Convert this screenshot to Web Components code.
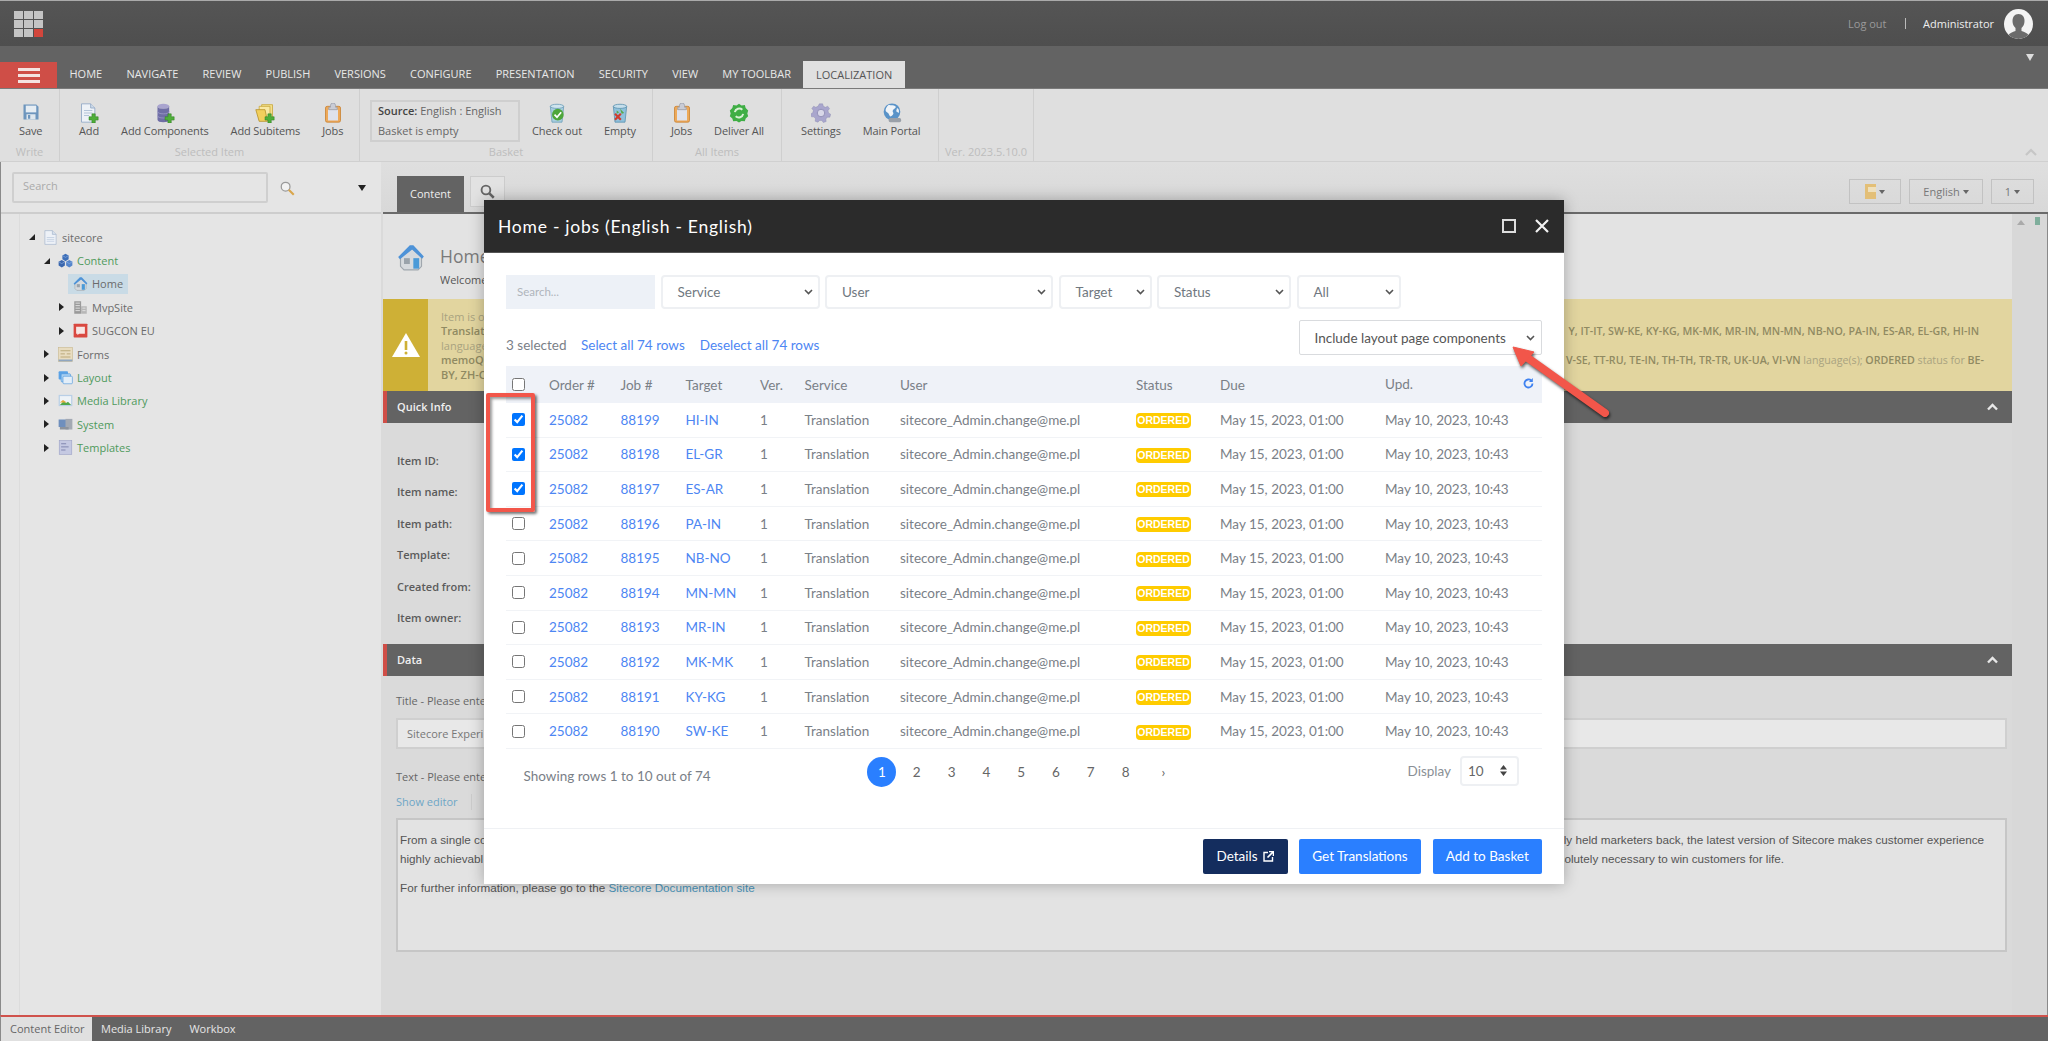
<!DOCTYPE html>
<html><head><meta charset="utf-8"><title>Sitecore</title>
<style>
html,body{margin:0;padding:0;width:2048px;height:1041px;overflow:hidden;background:#dadada;font-family:"Open Sans","Liberation Sans",sans-serif;}
sc-app{display:block;position:relative;width:2048px;height:1041px;overflow:hidden}
</style></head><body>
<sc-app>
  <sc-topbar></sc-topbar>
  <sc-tabbar active="LOCALIZATION"></sc-tabbar>
  <sc-ribbon>
    <sc-rgroup label="Write" w="60" pl="19"><sc-rbtn icon="save">Save</sc-rbtn></sc-rgroup>
    <sc-rgroup label="Selected Item" w="300" pl="19">
      <sc-rbtn icon="add">Add</sc-rbtn><sc-rbtn icon="db">Add Components</sc-rbtn><sc-rbtn icon="folder">Add Subitems</sc-rbtn><sc-rbtn icon="jobs">Jobs</sc-rbtn>
    </sc-rgroup>
    <sc-rgroup label="Basket" w="293" pl="10">
      <sc-source></sc-source><sc-rbtn icon="checkout">Check out</sc-rbtn><sc-rbtn icon="empty">Empty</sc-rbtn>
    </sc-rgroup>
    <sc-rgroup label="All Items" w="129" pl="18"><sc-rbtn icon="jobs">Jobs</sc-rbtn><sc-rbtn icon="deliver">Deliver All</sc-rbtn></sc-rgroup>
    <sc-rgroup label="" w="157" pl="19"><sc-rbtn icon="gear">Settings</sc-rbtn><sc-rbtn icon="globe">Main Portal</sc-rbtn></sc-rgroup>
    <sc-rgroup label="Ver. 2023.5.10.0" w="95" pl="0"></sc-rgroup>
  </sc-ribbon>
  <sc-workspace>
    <sc-tree slot="left">
      <sc-titem l="0" a="open" i="page">sitecore</sc-titem>
      <sc-titem l="1" a="open" i="cubes" g>Content</sc-titem>
      <sc-titem l="2" i="home" sel>Home</sc-titem>
      <sc-titem l="2" a="closed" i="building">MvpSite</sc-titem>
      <sc-titem l="2" a="closed" i="sugcon">SUGCON EU</sc-titem>
      <sc-titem l="1" a="closed" i="forms">Forms</sc-titem>
      <sc-titem l="1" a="closed" i="layout" g>Layout</sc-titem>
      <sc-titem l="1" a="closed" i="media" g>Media Library</sc-titem>
      <sc-titem l="1" a="closed" i="system" g>System</sc-titem>
      <sc-titem l="1" a="closed" i="templates" g>Templates</sc-titem>
    </sc-tree>
    <sc-editor slot="right"></sc-editor>
  </sc-workspace>
  <sc-bottombar></sc-bottombar>
  <sc-modal></sc-modal>
  <sc-annotations></sc-annotations>
</sc-app>
<script>
const plus='<path d="M15.5 13h4v3.5H23v4h-3.5V24h-4v-3.5H12v-4h3.5z" fill="#4fae3a" stroke="#2f7d22" stroke-width=".6"/>';
const ICONS={
save:'<path d="M2 2h17l3 3v17H2z" fill="#6d95bd"/><rect x="5" y="3.5" width="14" height="9" fill="#e6edf3"/><rect x="6" y="15" width="12" height="7" fill="#dfe7ee"/><rect x="8" y="16" width="3" height="5" fill="#6d95bd"/>',
add:'<path d="M3 1h11l5 5v17H3z" fill="#eef2f7" stroke="#8ea6c4"/><path d="M14 1v5h5" fill="#cfdbe9" stroke="#8ea6c4"/><path d="M6 9h10M6 12h10M6 15h6" stroke="#a9bcd3"/>'+plus,
db:'<ellipse cx="10" cy="4" rx="7" ry="3" fill="#a9a4cf"/><path d="M3 4v16c0 2 3 3 7 3s7-1 7-3V4c0 2-3 3-7 3S3 6 3 4z" fill="#6f6ea6"/><path d="M3 10c0 2 3 3 7 3s7-1 7-3M3 15c0 2 3 3 7 3s7-1 7-3" stroke="#9a97c6" fill="none"/>'+plus,
folder:'<path d="M8 2h13v16H8z" fill="#f4e08c" stroke="#c9a83f"/><path d="M5 4h13v16H5z" fill="#f9e9a3" stroke="#c9a83f"/><path d="M1 8h11l3 14H5z" fill="#f2cf5c" stroke="#b8942b"/>'+plus,
jobs:'<rect x="3" y="4" width="18" height="19" rx="2" fill="#eda95a" stroke="#c98436"/><rect x="6" y="8" width="12" height="13" fill="#dfe2ec"/><path d="M9 5V3a3 3 0 016 0v2h2v3H7V5z" fill="#c9ccd6" stroke="#9da1ad"/>',
checkout:'<path d="M4 4h16l-2 19H6z" fill="#a9cfe0" stroke="#6f9fb8"/><ellipse cx="12" cy="4" rx="8" ry="2.5" fill="#cfe4ee" stroke="#6f9fb8"/><circle cx="13" cy="14" r="7" fill="#4ea63b"/><path d="M9 14l3 3 5-6" stroke="#fff" stroke-width="2" fill="none"/>',
empty:'<path d="M4 4h16l-2 19H6z" fill="#8fc1dc" stroke="#5e93b0"/><ellipse cx="12" cy="4" rx="8" ry="2.5" fill="#c5deeb" stroke="#5e93b0"/><path d="M12 7l5 5-3 1zM8 9l3 2-3 2z" fill="#58a848"/><path d="M6 13l7 7M13 13l-7 7" stroke="#cf3c2e" stroke-width="2.6"/>',
deliver:'<path d="M12 1l3 2 4-.5 1 3.500 3 3-1 3.500 1 3.500-3 2.500-1 3.500-4-.5-3 2-3-2-4 .5-1-3.500-3-2.500 1-3.500-1-3.500 3-3 1-3.500 4 .5z" fill="#3fae45"/><path d="M7 11a5.500 5.500 0 019-3M17 13a5.500 5.500 0 01-9 3" stroke="#d8f0d4" stroke-width="2.400" fill="none"/>',
gear:'<path d="M10 1h4l.8 3 2.600 1.200L20 3.800l2.200 2.900-1.800 2.500.6 2.800 2.600 1.500-1 3.500-3 0-1.800 2.200.4 3-3.400 1.200-1.800-2.500h-2.800L8.400 23l-3.400-1.200.4-3-1.800-2.200-3 0-1-3.500 2.600-1.500.6-2.800L1 6.700l2.200-2.900 2.600 1.400L8.400 4z" fill="#a9a6cd" stroke="#8987b0" stroke-width=".5"/><circle cx="12" cy="12" r="4.500" fill="#d8d7e8" stroke="#8987b0"/>',
globe:'<circle cx="12" cy="10.500" r="10" fill="#5a93c8"/><path d="M8 2c3 1 6 0 8 2s-2 3-3 5 2 3 0 5-3 3-4 1-1-3-3-4-2-3-1-5 2-3 3-4z" fill="#f0f4f8"/><path d="M18 6c2 1 3 3 2 6l-3-2z" fill="#eef2f6"/><rect x="8" y="18" width="15" height="5" rx="2" fill="#9aa0a8"/>',
page:'<path d="M3 1h12l6 6v16H3z" fill="#edf1f7" stroke="#9fb0ca"/><path d="M15 1v6h6" fill="#d6e0ec" stroke="#9fb0ca"/><path d="M6 12h12M6 15h12M6 18h12" stroke="#b4c4da"/>',
cubes:'<path d="M12 1l5 3v6l-5 3-5-3V4z" fill="#3e6fb8"/><path d="M6 11l5 3v6l-5 3-5-3v-6z" fill="#3a66ad"/><path d="M18 11l5 3v6l-5 3-5-3v-6z" fill="#5585cc"/><path d="M7 4l5 3 5-3M1 14l5 3 5-3M13 14l5 3 5-3" stroke="#8fb0e0" fill="none"/>',
home:'<path d="M3 12L12 4l9 8v8l-3 3H6l-3-3z" fill="#d6dade" stroke="#a0a7ae"/><path d="M1 12L11 2h3l9 9.500-1.500 2L13 5.500 2.500 14z" fill="#4e93d8"/><rect x="14" y="13" width="5" height="9" fill="#4a9ad8"/><rect x="6" y="13" width="5" height="5" fill="#9aa3ab"/>',
building:'<path d="M2 2h11v20H2z" fill="#9a9a9a"/><path d="M13 10h9v12h-9z" fill="#b7b7b7"/><path d="M4 5h7M4 9h7M4 13h7M4 17h7M15 13h5M15 17h5" stroke="#e3e3e3" stroke-width="1.500"/>',
sugcon:'<rect x="1" y="1" width="22" height="22" rx="1" fill="#d94840"/><path d="M5 6h14v11H10l-3 2v-2H5z" fill="#f7e6e4"/>',
forms:'<rect x="1" y="1" width="22" height="22" fill="#e8dcc0" stroke="#c9b98f"/><path d="M1 20h22v3H1z" fill="#8fa6c0"/><path d="M4 6h16M4 11h7M14 11h6M4 16h16" stroke="#b9a676" stroke-width="1.500"/>',
layout:'<rect x="1" y="2" width="15" height="13" rx="1.500" fill="#5aa2e6"/><rect x="5" y="6" width="15" height="13" rx="1.500" fill="#a9d0f2" stroke="#4d97dc"/><rect x="8" y="10" width="15" height="12" rx="1.500" fill="#e3eef8" stroke="#4d97dc"/>',
media:'<rect x="1" y="3" width="22" height="18" fill="#b9cfe6"/><rect x="3" y="5" width="18" height="14" fill="#eef3f7"/><path d="M3 19l6-6 4 3 3-2 5 5z" fill="#4fa84a"/><path d="M3 15l5-4 6 4z" fill="#e2a93a"/>',
system:'<rect x="1" y="4" width="12" height="12" fill="#6f8fbd"/><rect x="12" y="3" width="11" height="17" fill="#a3a9b3"/><rect x="3" y="16" width="14" height="4" fill="#8d939c"/>',
templates:'<rect x="2" y="1" width="20" height="22" fill="#c5c9e2" stroke="#9da2c6"/><path d="M5 6h8M5 11h12M5 16h7" stroke="#7e83ad" stroke-width="1.500"/>',
search:'<circle cx="9" cy="9" r="7" fill="#f2f2f2" stroke="#9a9a9a" stroke-width="2"/><path d="M14 14l8 8" stroke="#d9a64c" stroke-width="3.500"/>',
searchdark:'<circle cx="9.500" cy="9.500" r="7" fill="none" stroke="#666" stroke-width="3"/><path d="M15 15l7 7" stroke="#666" stroke-width="4"/>'
};
function svg(n,w,h){return `<svg width="${w}" height="${h||w}" viewBox="0 0 24 24" style="display:block;flex:none">${ICONS[n]}</svg>`}
const chev='<svg width="9" height="6" viewBox="0 0 9 6" style="flex:none"><path d="M1 1l3.500 3.500L8 1" fill="none" stroke="#555" stroke-width="1.600"/></svg>';
function el(name,render){customElements.define(name,class extends HTMLElement{connectedCallback(){if(this.shadowRoot)return;const s=this.attachShadow({mode:'open'});s.innerHTML=render(this)}})}

el('sc-topbar',()=>`<style>
:host{display:flex;align-items:center;height:45px;margin-top:1px;background:linear-gradient(#555,#4e4e4e);box-shadow:0 -1px 0 #aaa;padding:0 15px 0 14px;font-size:11px;color:#eee}
.logo{display:grid;grid-template-columns:repeat(3,9px);grid-template-rows:repeat(3,8.300px);gap:1px;margin-top:1px}
.logo i{background:#c4c4c4}.logo i:last-child{background:#d2463c}
.r{margin-left:auto;display:flex;align-items:center}
.lo{color:#9a9a9a}.sep{width:1px;height:11px;background:#bbb;margin:0 17.500px 0 18px}
.av{width:29px;height:30px;border-radius:50%;background:#f3f3f3;margin-left:10px;overflow:hidden}
</style><div class="logo"><i></i><i></i><i></i><i></i><i></i><i></i><i></i><i></i><i></i></div>
<div class="r"><span class="lo">Log out</span><span class="sep"></span><span>Administrator</span>
<div class="av"><svg width="29" height="30" viewBox="0 0 29 30"><path d="M14.500 5c-4 0-6 3-6 7 0 3 1 5 3 7v3c-3 1-6 2-7 4 2 3 6 4 10 4s8-1 10-4c-1-2-4-3-7-4v-3c2-2 3-4 3-7 0-4-2-7-6-7z" fill="#6b6b6b"/></svg></div></div>`);

el('sc-tabbar',h=>{const t=['HOME','NAVIGATE','REVIEW','PUBLISH','VERSIONS','CONFIGURE','PRESENTATION','SECURITY','VIEW','MY TOOLBAR','LOCALIZATION'];
return `<style>
:host{display:flex;align-items:flex-end;height:42px;background:#636363;position:relative;font-size:11px;border-bottom:1px solid #7a7a7a;box-sizing:content-box}
.m{width:57px;height:26px;background:#cf4e47;display:flex;flex-direction:column;justify-content:center;align-items:center;gap:3px}
.m i{display:block;width:22px;height:3px;background:#f4e3e1}
.tabs{display:flex;padding-left:0}
.t{height:26px;line-height:26px;padding:0 12.100px;color:#e8e8e8;white-space:nowrap}
.t:first-child{padding-left:12.500px}
.t.a{background:#e0e0e0;color:#555;height:27px;line-height:27px;margin-left:0;padding:0 13px}
.dd{position:absolute;right:14px;top:8px;width:0;height:0;border:4px solid transparent;border-top:7px solid #ddd;border-bottom:0}
</style><div class="m"><i></i><i></i><i></i></div><div class="tabs">${t.map(x=>`<div class="t ${x==h.getAttribute('active')?'a':''}">${x}</div>`).join('')}</div><span class="dd"></span>`});

el('sc-ribbon',()=>`<style>
:host{display:flex;height:72px;background:#dfdfdf;border-bottom:1px solid #d0d0d0;position:relative}
svg{position:absolute;right:11px;bottom:5px}
</style><slot></slot><svg width="12" height="8" viewBox="0 0 12 8"><path d="M1 7l5-5 5 5" fill="none" stroke="#c6c6c6" stroke-width="2.200"/></svg>`);

el('sc-rgroup',h=>`<style>
:host{display:flex;flex-direction:column;box-sizing:border-box;width:${h.getAttribute('w')}px;border-right:1px solid #cfcfcf;height:72px}
.c{display:flex;gap:22px;padding-left:${h.getAttribute('pl')}px;height:54px;padding-top:14px;box-sizing:border-box;flex:none}
.l{flex:1;text-align:center;font-size:11px;color:#bdbdbd;line-height:18px;white-space:nowrap}
</style><div class="c"><slot></slot></div><div class="l">${h.getAttribute('label')}</div>`);

el('sc-rbtn',h=>`<style>
:host{display:flex;flex-direction:column;align-items:center;font-size:11px;letter-spacing:-.12px;color:#555;white-space:nowrap;line-height:16px}
.i{height:20px}
</style><div class="i">${svg(h.getAttribute('icon'),h.getAttribute('icon')=='save'?18:20)}</div><slot></slot>`);

el('sc-source',()=>`<style>
:host{display:flex;flex-direction:column;justify-content:center;gap:7px;box-sizing:border-box;width:150px;height:42px;border:2px solid #cfcfcf;margin:-3px -10px 0 0;padding:0 6px 2px;font-size:11px;color:#666;line-height:13px;white-space:nowrap}
b{font-weight:600;color:#444}
</style><div><b>Source:</b> English : English</div><div>Basket is empty</div>`);

el('sc-workspace',()=>`<style>
:host{display:flex;height:853px}
::slotted(sc-tree){width:381px;flex:none}
::slotted(sc-editor){flex:1}
</style><slot name="left"></slot><slot name="right"></slot>`);

el('sc-tree',()=>`<style>
:host{display:flex;flex-direction:column;background:#e5e5e5;box-sizing:border-box;border-left:1px solid #8a8a8a}
.s{height:52px;flex:none;box-sizing:border-box;padding:10px 0 0 11px;display:flex;border-bottom:2px solid #cdcdcd}
.inp{width:256px;height:31px;box-sizing:border-box;border:2px solid #cfcfcf;border-radius:2px;font-size:11px;color:#aaa;line-height:24px;padding-left:9px}
.ic{margin:9px 0 0 12px}
.tri{width:0;height:0;border:4.500px solid transparent;border-top:6px solid #222;border-bottom:0;margin:13px 0 0 63px}
.b{flex:1;margin-left:18px;border-left:1px solid #dcdcdc;position:relative;padding-top:11.500px}
.w{margin-left:-19px;display:flex;flex-direction:column}
</style><div class="s"><div class="inp">Search</div><div class="ic">${svg('search',15)}</div><div class="tri"></div></div>
<div class="b"><div class="w"><slot></slot></div></div>`);

el('sc-titem',h=>{const l=+h.getAttribute('l'),a=h.getAttribute('a'),g=h.hasAttribute('g'),sel=h.hasAttribute('sel');
const ar=a=='open'?'<svg width="6" height="6" viewBox="0 0 6 6" style="display:block"><path d="M6 0v6H0z" fill="#222"/></svg>':a=='closed'?'<svg width="5" height="8" viewBox="0 0 5 8" style="display:block"><path d="M0 0l5 4-5 4z" fill="#222"/></svg>':'';
return `<style>
:host{display:flex;align-items:center;height:23.400px;margin-left:${28+15*l}px;font-size:11px;white-space:nowrap;color:${g?'#4f9a5c':'#6b6b6b'}}
.a{width:9px;flex:none}
.n{display:flex;align-items:center;gap:4px;padding:0 5px;height:20px;${sel?'background:#c9dbe6;':''}}
</style><div class="a">${ar}</div><div class="n">${svg(h.getAttribute('i'),15)}<slot></slot></div>`});

el('sc-editor',()=>`<style>
:host{display:flex;flex-direction:column;min-width:0;background:#dadada;font-size:11px;color:#555}
.top{height:50px;flex:none;display:flex;align-items:flex-start;padding:14px 14px 0 16px;box-sizing:border-box;border-bottom:0;gap:6px;background:linear-gradient(#dfdfdf,#d8d8d8)}
.ct{height:36px;width:67px;background:#636363;color:#eee;display:flex;align-items:center;justify-content:center;padding-bottom:2px;box-sizing:border-box}
.st{width:35px;height:31px;box-sizing:border-box;background:#e2e2e2;border:1px solid #ccc;display:flex;align-items:center;justify-content:center}
.btns{margin-left:auto;display:flex;gap:8px;padding-top:3px}
.b{height:25px;box-sizing:border-box;border:1px solid #c2c2c2;display:flex;align-items:center;justify-content:center;gap:3px;color:#777}
.b i{border:3.500px solid transparent;border-top:4px solid #666;border-bottom:0;width:0;height:0}
.line{height:2px;background:#6a6a6a;flex:none;margin-left:2px}
.m{flex:1;display:flex;min-height:0}
.main{width:1629px;margin-left:2px;flex:none;display:flex;flex-direction:column}
.sb{flex:1;background:#d8d8d8;border-right:1px solid #8a8a8a;position:relative}
.up{position:absolute;left:5px;top:6px;border:4px solid transparent;border-bottom:5px solid #aaa;border-top:0;width:0;height:0}
.gr{position:absolute;left:23px;top:3px;width:5px;height:8px;background:#7fae9c}
.hd{height:85px;flex:none;background:#e3e3e3;display:flex;padding:29px 0 0 14px;box-sizing:border-box}
.hd .tt{margin-left:15px;overflow:hidden}
.hd h1{font-weight:400;font-size:17.500px;margin:0;color:#7a7a7a;line-height:26px}
.hd p{margin:3px 0 0;line-height:16px;color:#555}
.warn{height:92px;flex:none;display:flex;background:#e2d59f;color:#a9a37f}
.wi{width:45px;background:#ceb036;display:flex;align-items:center;justify-content:center}
.wt{flex:1;padding:11px 33px 0 13px;line-height:14.400px;display:flex;flex-direction:column}
.wl{height:14.400px;display:flex;justify-content:space-between;white-space:nowrap}
.fr{font-size:10.650px}
b{font-weight:600;color:#908a62}
.sec{height:32px;flex:none;background:#636363;border-left:4px solid #cf4e47;box-sizing:border-box;display:flex;align-items:center;padding:0 14px 0 10px;color:#f0f0f0;font-weight:600;justify-content:space-between}
.sec span{margin-top:-2px}
.qi{height:221px;flex:none;padding:22px 0 0 14px;box-sizing:border-box}
.qi div{height:31.400px;line-height:31.400px;font-weight:600;color:#5b5b5b}
.data{flex:1;padding:17px 5px 0 13px;overflow:hidden}
.lb{height:16px;line-height:16px;color:#666}
.in{height:31px;margin-top:9px;box-sizing:border-box;border:2px solid #cfcfcf;background:#e8e8e8;padding-left:9px;line-height:27px;color:#777}
.se{display:flex;height:16px;line-height:16px;margin-top:9px;color:#6ea6c6}
.se span{border-right:1px solid #ccc;padding-right:13px}
.tx{height:134px;margin-top:8px;box-sizing:border-box;border:2px solid #c6c6c6;background:#e3e3e3;padding:10px 0 0 2px;font:11.700px/19px "Liberation Sans",Arial,sans-serif;color:#555}
.tl{display:flex;justify-content:space-between;padding-right:21px;white-space:nowrap}
.tx p{margin:10px 0 0}
.tx a{color:#4a93b8}
</style>
<div class="top"><div class="ct">Content</div><div class="st">${svg('searchdark',15)}</div>
<div class="btns"><div class="b" style="width:52px"><svg width="11" height="15" viewBox="0 0 11 15"><rect width="11" height="15" fill="#e3bf77"/><rect x="3" y="3" width="8" height="5" fill="#efe0bc"/></svg><i></i></div><div class="b" style="width:74px">English<i></i></div><div class="b" style="width:43px">1<i></i></div></div></div>
<div class="line"></div>
<div class="m"><div class="main">
<div class="hd">${svg('home',28)}<div class="tt"><h1>Home</h1><p>Welcome</p></div></div>
<div class="warn"><div class="wi"><svg width="30" height="26" viewBox="0 0 30 26"><path d="M15 1L29 25H1z" fill="#fff"/><path d="M15 9v9" stroke="#ceb036" stroke-width="2.600"/><circle cx="15" cy="21" r="1.500" fill="#ceb036"/></svg></div>
<div class="wt">
<div class="wl"><span>Item is o</span></div>
<div class="wl"><b>Translat</b><b class="fr">Y, IT-IT, SW-KE, KY-KG, MK-MK, MR-IN, MN-MN, NB-NO, PA-IN, ES-AR, EL-GR, HI-IN</b></div>
<div class="wl"><span>language</span></div>
<div class="wl"><b>memoQ</b><span class="fr" style="margin-right:-5px"><b>V-SE, TT-RU, TE-IN, TH-TH, TR-TR, UK-UA, VI-VN</b> language(s); <b>ORDERED</b> status for <b>BE-</b></span></div>
<div class="wl"><b>BY, ZH-C</b></div>
</div></div>
<div class="sec"><span>Quick Info</span><svg width="11" height="8" viewBox="0 0 11 8"><path d="M1 6.500l4.500-4.500L10 6.500" fill="none" stroke="#e8e8e8" stroke-width="2.400"/></svg></div>
<div class="qi"><div>Item ID:</div><div>Item name:</div><div>Item path:</div><div>Template:</div><div>Created from:</div><div>Item owner:</div></div>
<div class="sec"><span>Data</span><svg width="11" height="8" viewBox="0 0 11 8"><path d="M1 6.500l4.500-4.500L10 6.500" fill="none" stroke="#e8e8e8" stroke-width="2.400"/></svg></div>
<div class="data"><div class="lb">Title - Please ente</div><div class="in">Sitecore Experi</div>
<div class="lb" style="margin-top:20px">Text - Please ente</div><div class="se"><span>Show editor</span></div>
<div class="tx"><div class="tl"><span>From a single co</span><span>ly held marketers back, the latest version of Sitecore makes customer experience</span></div>
<div class="tl"><span>highly achievabl</span><span style="margin-right:200px">solutely necessary to win customers for life.</span></div>
<p>For further information, please go to the <a>Sitecore Documentation site</a></p></div></div>
</div><div class="sb"><i class="up"></i><i class="gr"></i></div></div>`);

el('sc-bottombar',()=>`<style>
:host{display:flex;height:26px;box-sizing:border-box;margin-top:0;background:#636363;border-top:2px solid #d0524c;border-left:1px solid #8a8a8a;font-size:11px;color:#e6e6e6;line-height:24px}
.a{background:#e0e0e0;color:#666;padding:0 9px;width:73px;margin-right:9px;white-space:nowrap}
.t{margin-right:18px}
</style><div class="a">Content Editor</div><div class="t">Media Library</div><div class="t">Workbox</div>`);

el('sc-select',h=>`<style>
:host{display:flex;align-items:center;justify-content:space-between;box-sizing:border-box;height:34px;width:${h.getAttribute('w')}px;border:2px solid #eef0f3;border-radius:4px;padding:0 5px 0 15px;font-size:13.500px;color:#707880;flex:none}
</style><span><slot></slot></span>${chev}`);

const ROWS=[['88199','HI-IN',1],['88198','EL-GR',1],['88197','ES-AR',1],['88196','PA-IN'],['88195','NB-NO'],['88194','MN-MN'],['88193','MR-IN'],['88192','MK-MK'],['88191','KY-KG'],['88190','SW-KE']];
const COLS='37px 71.500px 65px 74.500px 44.500px 95.500px 236px 84px 165px 157.500px';
el('sc-jobs',()=>`<style>
:host{display:block;font-size:13.500px;color:#7a8087}
.r{display:grid;grid-template-columns:${COLS};align-items:center;height:34.600px;box-sizing:border-box;border-bottom:1px solid #f1f3f6;white-space:nowrap;padding-left:6px}
.h{height:37px;background:#eff2f8;border:0;color:#7a8087}
input{margin:0;width:13px;height:13px;display:block;accent-color:#0075ff}
a{color:#4d86f3}
.bd{display:block;width:55px;height:15px;text-align:center;background:#ffcc00;color:#fff;border-radius:4px;font:700 10.500px/15px "Liberation Sans",Arial,sans-serif;position:relative;top:1px}
</style>
<div class="r h"><span><input type="checkbox"></span><span>Order #</span><span>Job #</span><span>Target</span><span>Ver.</span><span>Service</span><span>User</span><span>Status</span><span>Due</span><span style="display:flex;justify-content:space-between;padding-right:9px;margin-top:-2px">Upd.<svg width="11" height="11" viewBox="0 0 11 11" style="margin-top:2px"><path d="M9.500 5.500a4 4 0 11-1.200-2.900" fill="none" stroke="#3f82f0" stroke-width="1.800"/><path d="M9.800 0v4H6z" fill="#3f82f0"/></svg></span></div>
${ROWS.map(r=>`<div class="r"><span><input type="checkbox" ${r[2]?'checked':''}></span><a>25082</a><a>${r[0]}</a><a>${r[1]}</a><span>1</span><span>Translation</span><span>sitecore_Admin.change@me.pl</span><span><i class="bd">ORDERED</i></span><span>May 15, 2023, 01:00</span><span>May 10, 2023, 10:43</span></div>`).join('')}`);

el('sc-pager',()=>`<style>
:host{display:grid;grid-template-columns:358.600px 1fr auto;height:79px;font-size:13.500px;color:#7a8087;box-sizing:border-box;padding-top:8px}
.sh{padding:11px 0 0 17.500px;line-height:17px;white-space:nowrap}
.p{display:flex;height:30px;color:#666}
.p span{width:34.800px;display:flex;align-items:center;justify-content:center}
.p .c{width:29px;height:30px;margin:0 2.900px;background:#2a7fff;color:#fff;border-radius:50%}
.p .nx{margin-left:3px}
.d{display:flex;height:30px;align-items:center;padding-right:23px;gap:9px;color:#8a9096;margin-top:-1px}
.s{width:59px;height:30px;box-sizing:border-box;border:2px solid #eef0f3;border-radius:4px;display:flex;align-items:center;justify-content:space-between;padding:0 10px 0 6px;color:#666}
</style><div class="sh">Showing rows 1 to 10 out of 74</div>
<div class="p"><span class="c">1</span><span>2</span><span>3</span><span>4</span><span>5</span><span>6</span><span>7</span><span>8</span><span class="nx">›</span></div>
<div class="d">Display<div class="s">10<svg width="7" height="11" viewBox="0 0 7 11"><path d="M3.500 0L7 4.500H0zM3.500 11L0 6.500h7z" fill="#444"/></svg></div></div>`);

el('sc-modal',()=>`<style>
:host{position:absolute;left:484px;top:200px;width:1080px;height:684px;background:#fff;box-shadow:0 0 14px rgba(0,0,0,.28);display:flex;flex-direction:column;font-family:Lato,"Open Sans",sans-serif;font-size:13.500px;color:#7a8087}
header{height:53px;flex:none;box-sizing:border-box;background:#2b2b2b;border-bottom:1px solid #555;display:flex;align-items:center;padding:0 15px 0 14px;color:#fff;font-size:17.500px;letter-spacing:.75px}
header .x{margin-left:auto;display:flex;gap:19px;align-items:center}
.sq{width:14px;height:14px;box-sizing:border-box;border:2px solid #ddd}
main{padding:22px 22px 0;flex:1}
.f{display:flex;gap:5.500px;height:34px}
.srch{width:149px;background:#edf1f7;font-size:11.500px;color:#b0b5bc;padding-left:11px;line-height:34px;box-sizing:border-box;flex:none}
.sel{display:flex;justify-content:space-between;align-items:flex-end;height:35px;margin:11px 0}
.sel .n{display:flex;padding-bottom:1px;line-height:18px}
.sel a{color:#4d86f3;margin-left:14.500px}.sel a+a{margin-left:15px}
.inc{width:243px;height:35px;box-sizing:border-box;border:1.500px solid #d9dbde;border-radius:2px;display:flex;align-items:center;justify-content:space-between;padding:0 6px 0 14.500px;color:#555;margin-bottom:0}
footer{flex:none;height:56px;box-sizing:border-box;border-top:1px solid #eff1f4;padding:10px 22px 0;display:flex;justify-content:flex-end;gap:11.500px}
.btn{height:34.500px;box-sizing:border-box;display:flex;align-items:center;justify-content:center;gap:5px;color:#fff;border-radius:2px;background:#2a7fff}
.d{background:#142d5e}
</style>
<header>Home - jobs (English - English)<div class="x"><span class="sq"></span><svg width="14" height="14" viewBox="0 0 14 14"><path d="M1 1l12 12M13 1L1 13" stroke="#f2f2f2" stroke-width="2.200"/></svg></div></header>
<main><div class="f"><div class="srch">Search...</div><sc-select w="159">Service</sc-select><sc-select w="228">User</sc-select><sc-select w="93">Target</sc-select><sc-select w="134">Status</sc-select><sc-select w="104">All</sc-select></div>
<div class="sel"><div class="n"><span>3 selected</span><a>Select all 74 rows</a><a>Deselect all 74 rows</a></div><div class="inc"><span>Include layout page components</span>${chev}</div></div>
<sc-jobs></sc-jobs><sc-pager></sc-pager></main>
<footer><div class="btn d" style="width:85px">Details<svg width="11" height="11" viewBox="0 0 11 11"><path d="M5 1.500H1v8.500h8.500V6" fill="none" stroke="#fff" stroke-width="1.400"/><path d="M6 0.500h4.500V5M10 1L4.500 6.500" fill="none" stroke="#fff" stroke-width="1.600"/></svg></div><div class="btn" style="width:122px">Get Translations</div><div class="btn" style="width:109.500px">Add to Basket</div></footer>`);

el('sc-annotations',()=>`<style>
:host{position:absolute;left:0;top:0;width:0;height:0}
.box{position:absolute;left:486px;top:393px;width:49px;height:119px;box-sizing:border-box;border:4px solid #f2564a;border-radius:2px;box-shadow:2px 2px 3px rgba(0,0,0,.55),inset 2px 2px 3px rgba(0,0,0,.4)}
svg{position:absolute;left:1500px;top:335px;filter:drop-shadow(1px 2px 1.500px rgba(0,0,0,.65))}
</style><div class="box"></div>
<svg width="120" height="95" viewBox="1500 335 120 95"><path d="M1605 413L1525 356" stroke="#f2564a" stroke-width="8" stroke-linecap="round"/><path d="M1513 347L1534 352 1521 366z" fill="#f2564a" stroke="#f2564a" stroke-linejoin="round"/></svg>`);
</script>
</body></html>
